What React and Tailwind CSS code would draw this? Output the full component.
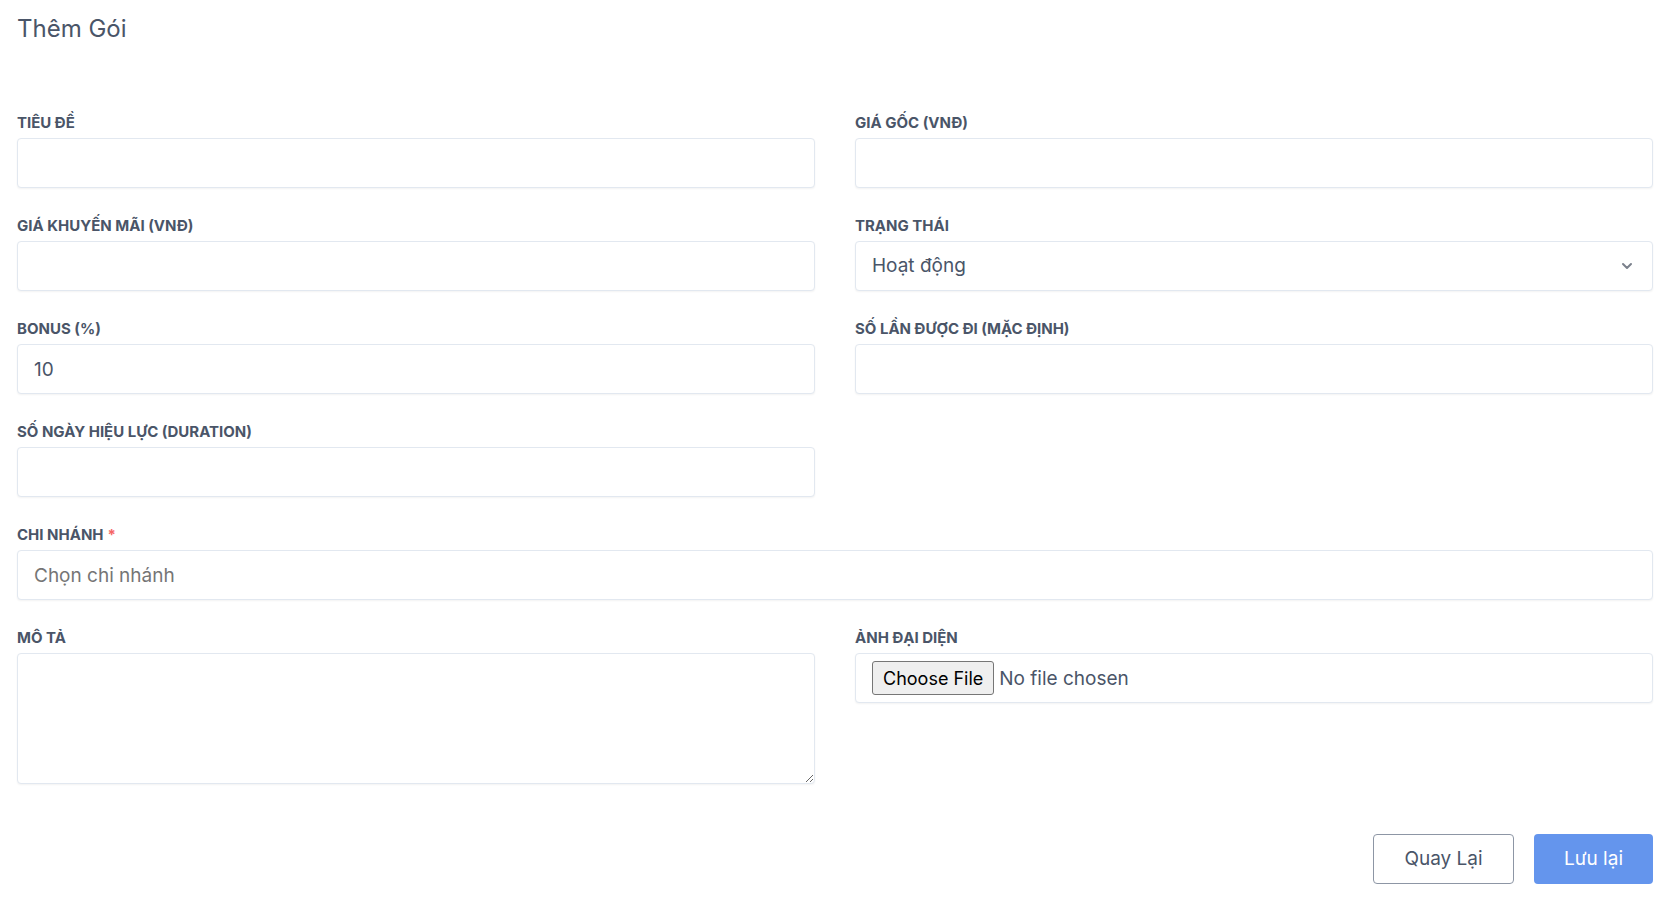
import { ChevronDown } from 'lucide-react';

const font = { fontFamily: 'Inter, "Noto Sans", sans-serif' };

function Label({ children, required }) {
  return (
    <label className="block h-5 leading-5 mb-[5px] text-[15px] font-bold uppercase text-[#4a5568]">
      {children}
      {required && <span className="text-[#f56565] ml-1">*</span>}
    </label>
  );
}

const inputCls =
  'block w-full h-[50px] px-[16px] rounded-[4px] border border-[#e2e8f0] bg-white text-[19px] text-[#4a5568] shadow-[0_1px_2px_rgba(0,0,0,0.05)] outline-none placeholder:text-[#757575]';

function Field({ label, required, children, className = '' }) {
  return (
    <div className={className}>
      <Label required={required}>{label}</Label>
      {children}
    </div>
  );
}

export default function App() {
  return (
    <div className="min-h-screen bg-white pl-[17px] pr-[27px] pt-[13px]" style={font}>
      <h1 className="text-2xl leading-8 text-[#4a5568]">Thêm Gói</h1>

      <form className="mt-[68px]">
        <div className="grid grid-cols-2 gap-x-10 gap-y-[28px]">
          <Field label="Tiêu đề">
            <input type="text" className={inputCls} />
          </Field>
          <Field label="Giá gốc (VNĐ)">
            <input type="text" className={inputCls} />
          </Field>

          <Field label="Giá khuyến mãi (VNĐ)">
            <input type="text" className={inputCls} />
          </Field>
          <Field label="Trạng thái">
            <div className="relative">
              <select className={inputCls + ' appearance-none pr-10'} defaultValue="1">
                <option value="1">Hoạt động</option>
                <option value="0">Không hoạt động</option>
              </select>
              <ChevronDown
                size={16}
                strokeWidth={3}
                className="absolute right-[18px] top-[17px] text-[#7b818c] pointer-events-none"
              />
            </div>
          </Field>

          <Field label="Bonus (%)">
            <input type="text" defaultValue="10" className={inputCls} />
          </Field>
          <Field label="Số lần được đi (mặc định)">
            <input type="text" className={inputCls} />
          </Field>

          <Field label="Số ngày hiệu lực (duration)">
            <input type="text" className={inputCls} />
          </Field>
          <div />

          <Field label="Chi nhánh" required className="col-span-2">
            <input type="text" placeholder="Chọn chi nhánh" className={inputCls} />
          </Field>

          <Field label="Mô tả">
            <textarea className="block w-full h-[131px] px-[16px] py-3 rounded-[4px] border border-[#e2e8f0] bg-white text-[19px] text-[#4a5568] shadow-[0_1px_2px_rgba(0,0,0,0.05)] outline-none" />
          </Field>
          <Field label="Ảnh đại diện">
            <div className="flex items-center h-[50px] px-[16px] rounded-[4px] border border-[#e2e8f0] bg-white shadow-[0_1px_2px_rgba(0,0,0,0.05)]">
              <input
                type="file"
                className="text-[19px] text-[#4a5568] file:h-[34px] file:px-[10px] file:mr-[5px] file:bg-[#efefef] file:text-black file:text-[18px] file:border file:border-[#767676] file:rounded-[3px]"
              />
            </div>
          </Field>
        </div>

        <div className="flex justify-end gap-5 mt-[50px]">
          <button
            type="button"
            className="w-[141px] h-[50px] rounded-[4px] border border-[#8d96a5] bg-white text-[19px] text-[#4a5568]"
          >
            Quay Lại
          </button>
          <button
            type="submit"
            className="w-[119px] h-[50px] rounded-[4px] bg-[#6495ed] text-[19px] text-white"
          >
            Lưu lại
          </button>
        </div>
      </form>
    </div>
  );
}
